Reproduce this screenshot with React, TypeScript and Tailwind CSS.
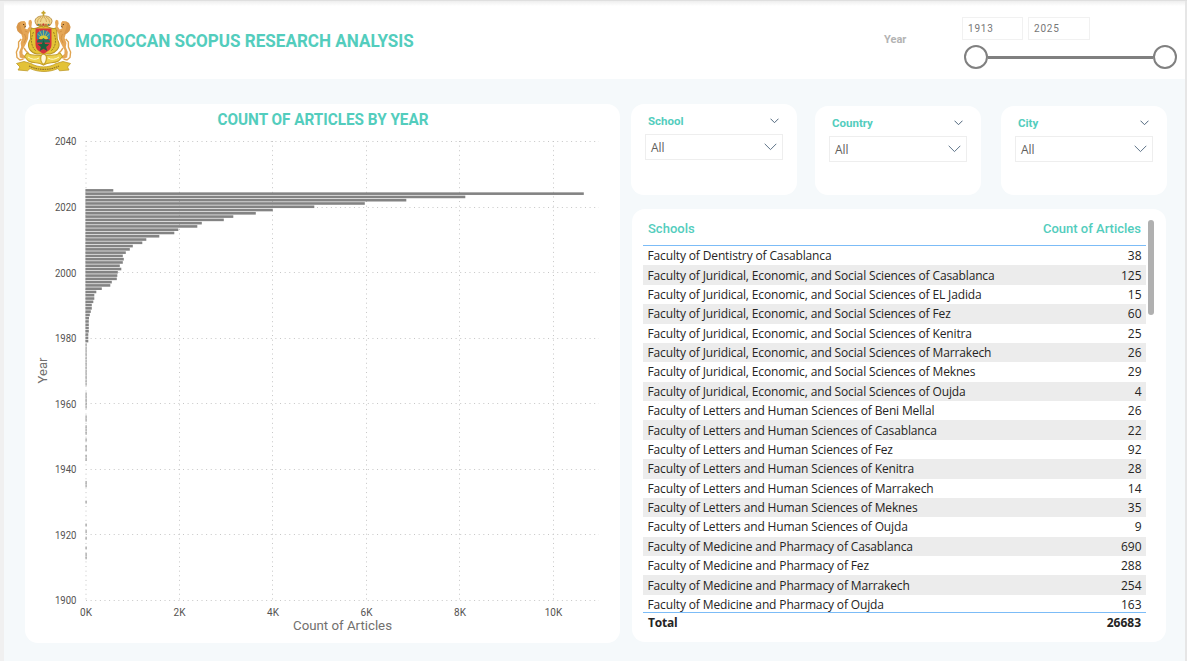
import React from "react";

const DIN = "font-[Roboto,sans-serif]";
const SEGOE = "font-['Open_Sans',sans-serif]";

const schools: [string, number][] = [
  ["Faculty of Dentistry of Casablanca", 38],
  ["Faculty of Juridical, Economic, and Social Sciences of Casablanca", 125],
  ["Faculty of Juridical, Economic, and Social Sciences of EL Jadida", 15],
  ["Faculty of Juridical, Economic, and Social Sciences of Fez", 60],
  ["Faculty of Juridical, Economic, and Social Sciences of Kenitra", 25],
  ["Faculty of Juridical, Economic, and Social Sciences of Marrakech", 26],
  ["Faculty of Juridical, Economic, and Social Sciences of Meknes", 29],
  ["Faculty of Juridical, Economic, and Social Sciences of Oujda", 4],
  ["Faculty of Letters and Human Sciences of Beni Mellal", 26],
  ["Faculty of Letters and Human Sciences of Casablanca", 22],
  ["Faculty of Letters and Human Sciences of Fez", 92],
  ["Faculty of Letters and Human Sciences of Kenitra", 28],
  ["Faculty of Letters and Human Sciences of Marrakech", 14],
  ["Faculty of Letters and Human Sciences of Meknes", 35],
  ["Faculty of Letters and Human Sciences of Oujda", 9],
  ["Faculty of Medicine and Pharmacy of Casablanca", 690],
  ["Faculty of Medicine and Pharmacy of Fez", 288],
  ["Faculty of Medicine and Pharmacy of Marrakech", 254],
  ["Faculty of Medicine and Pharmacy of Oujda", 163],
];

// Bar lengths in pixels, from 2025 going back one year at a time.
const lengths = [
  27.5, 498, 379.5, 320.5, 279, 228.5, 187, 170, 147.5, 138, 116, 111.5, 92.5, 88.5, 73.5, 60.5,
  56.5, 47, 44, 40, 37, 38, 37, 34, 35.5, 32, 31.5, 31, 26, 24.5, 16, 10.5, 8.5, 8.5, 7.5, 6, 6,
  5, 4, 3.2, 3, 3, 3, 3, 2.5, 2.5, 2.5,
];
const sparseYears = [
  1978, 1977, 1976, 1975, 1974, 1973, 1972, 1971, 1970, 1969, 1968, 1967, 1966, 1963, 1962, 1961,
  1960, 1959, 1956, 1955, 1953, 1952, 1951, 1949, 1947, 1946, 1944, 1943, 1936, 1935, 1930, 1923,
  1921, 1919, 1916, 1914, 1913,
];

const yOf = (year: number) => 496.5 - (year - 1900) * 3.277;
const X0 = 61;

function Chart() {
  return (
    <svg width="594" height="539" className={`block ${DIN}`}>
      <g stroke="#c6c6c6" strokeWidth="1" strokeDasharray="1 3.62">
        {[1900, 1920, 1940, 1960, 1980, 2000, 2020, 2040].map((y) => (
          <line key={y} x1={X0} x2={574} y1={Math.floor(yOf(y)) + 0.5} y2={Math.floor(yOf(y)) + 0.5} />
        ))}
        {[0, 1, 2, 3, 4, 5].map((k) => {
          const x = Math.round(X0 + k * 93.5) - (k ? 0.5 : 0);
          return <line key={k} x1={x} x2={x} y1={37} y2={497} />;
        })}
      </g>
      <g fill="#838383">
        {lengths.map((w, i) => (
          <rect key={i} x={60.4} y={yOf(2025 - i) - 1.8} width={w + 0.4} height={2.6} />
        ))}
      </g>
      <g fill="#a0a0a0">
        {sparseYears.map((y) => (
          <rect key={y} x={60.5} y={yOf(y) - 1.6} width={1.2} height={3} />
        ))}
      </g>
      <g fill="#555351" fontSize="10" textAnchor="end">
        {[1900, 1920, 1940, 1960, 1980, 2000, 2020, 2040].map((y) => (
          <text key={y} x="51.5" y={yOf(y) + 3.7} textLength="21.5" lengthAdjust="spacingAndGlyphs">{y}</text>
        ))}
      </g>
      <g fill="#555351" fontSize="10" textAnchor="middle">
        {["0K", "2K", "4K", "6K", "8K", "10K"].map((t, i) => (
          <text key={t} x={X0 + i * 93.5} y="512">{t}</text>
        ))}
      </g>
      <text x="317.5" y="526" fill="#72706e" fontSize="13" textAnchor="middle" textLength="99" lengthAdjust="spacingAndGlyphs">Count of Articles</text>
      <text transform="translate(22 266.5) rotate(-90)" fill="#72706e" fontSize="13" textAnchor="middle">Year</text>
      <text x="298" y="21" fill="#53cdbd" fontSize="16" fontWeight="700" textAnchor="middle" textLength="211" lengthAdjust="spacingAndGlyphs">
        COUNT OF ARTICLES BY YEAR
      </text>
    </svg>
  );
}

function Lion() {
  return (
    <g>
      <path d="M4.2 12.5 L6.5 10.2 L9.5 10 L11 12 L11.2 15 L9.8 17.2 L12.2 18.4 L14.4 15.5 L13.4 12.5 L13.8 9.5 L16 8.8 L17 11 L16.4 16 L15 20 L13.5 23 L13 28 L11 32.5 L9.2 36 L7.5 39 L7.6 43 L10.5 45.6 L9.5 47.8 L4.8 46.6 L4.2 41 L6.2 36 L5.6 32 L7.4 27 L6 22 L4 17.5 Z" fill="#e5a656" />
      <path d="M6.3 28 L3.6 31 L3.6 36 L1.4 41 L2 46.5 L5 49 L8.5 48 M9 37 L11 40 L13.5 42" fill="none" stroke="#e0a450" strokeWidth="1.4" />
      <path d="M1.4 16 L3 12 L6.5 10 L5 13.5 L6.2 18 L8.4 24 L5 22.5 L2.4 20 Z" fill="#d9974a" />
      <path d="M8 13.4 l1.4 .5 M9.4 16 l1.4 -.3" stroke="#593717" strokeWidth="1" />
      <path d="M9.5 23 L11 27 L9 32 M12.5 21 L10 20" fill="none" stroke="#c98538" strokeWidth=".6" />
    </g>
  );
}

function Emblem() {
  return (
    <svg width="57" height="62" viewBox="0 0 57 62" className="block shrink-0">
      <g transform="translate(0 1)">
        <Lion />
        <g transform="translate(57 0) scale(-1 1)"><Lion /></g>
      </g>
      <path d="M16.5 18 C22 21 24 14 28.5 17 C33 14 36 21 40.5 18 C44 23 40 27 43.5 32 C46 38 40 43 35 44 L22 44 C16 43 12 38 14 32 C18 27 13.5 23 16.5 18Z" fill="#e3c335" stroke="#bb9727" strokeWidth="1.1" />
      <path d="M18.5 22 C15.5 29 15.5 36 21 41 M38.5 22 C41.5 29 41.5 36 36 41" fill="none" stroke="#9a7c25" strokeWidth="1" strokeDasharray="2 1" />
      <path d="M20.5 18.5 H36.5 V34 C36.5 40 33 41 28.5 44 C24 41 20.5 40 20.5 34Z" fill="#d5363c" />
      <path d="M22 29 V24 C23.5 19 33.5 19 35 24 V29Z" fill="#3388a5" />
      <path d="M28.5 29 V20 M28.5 29 L24.5 20.5 M28.5 29 L32.5 20.5 M28.5 29 L22.5 24 M28.5 29 L34.5 24" stroke="#c3c55a" strokeWidth=".7" />
      <path d="M24 29 A4.5 3.5 0 0 1 33 29Z" fill="#d9cc37" />
      <path d="M22 31 L24 28.8 L26 30 L28.5 28 L31 30 L33 28.8 L35 31 V32.5 H22Z" fill="#226f5d" />
      <path d="M28.5 30 L30.1 34 L34.4 34.2 L31.1 37 L32.3 41 L28.5 38.7 L24.7 41 L25.9 37 L22.6 34.2 L26.9 34Z" fill="#176340" />
      <path d="M20.5 13 C18.5 9 23 5.5 28.5 6 C34 5.5 38.5 9 36.5 13 L35 15.5 H22Z" fill="#efd78e" stroke="#b88a3d" strokeWidth=".9" />
      <path d="M22.4 12.5 Q22 9 26 7 M25.5 12 Q25.5 9 28 7 M31.5 12 Q31.5 9 29 7 M34.6 12.5 Q35 9 31 7" fill="none" stroke="#c79542" strokeWidth=".7" />
      <path d="M21.8 14.8 H35.2" stroke="#bf7a3c" strokeWidth="2" strokeDasharray="2 .7" />
      <path d="M28.5 .7 V6 M26.5 2.9 H30.5" stroke="#c7a52e" strokeWidth="1.6" />
      <path d="M23 14.6 h1.5 M32.8 14.6 h1.5" stroke="#2f9a72" strokeWidth="1.4" />
      <circle cx="28.5" cy="14.5" r="1" fill="#cc3632" />
      <path d="M12 43 C18 47.5 23 43.5 28.5 46.5 C34 43.5 39 47.5 45 43 L47.5 46.5 L43.5 51 C38 54 34 51.5 28.5 55 C23 51.5 19 54 13.5 51 L9.5 46.5Z" fill="#ecd04b" stroke="#c49e26" strokeWidth="1.1" />
      <path d="M26 46 C27 43.5 31 43.5 31.5 47 C31.5 50 30.5 53 28.8 54.5 C26 53 25 49 26 46" fill="#fff8dc" stroke="#c9a228" strokeWidth="1.2" />
      <path d="M13 47 Q19 51 24 48 M33 48 Q38 51 44 47" fill="none" stroke="#fff8cc" strokeWidth="1" />
      <path d="M1.5 53.5 L9 51.5 L16 53.5 C23 58 34 58 41 53.5 L48 51.5 L55.5 53.5 L52.5 57 L54 60 L44.5 60.8 L43 58.5 C34 62.5 24 62.5 15 58.5 L12.5 60.8 L3 60 L5 57Z" fill="#e3c237" stroke="#bf9b28" strokeWidth=".8" />
      <path d="M14 56 C23 60.5 35 60.5 44 56" fill="none" stroke="#8d6e28" strokeWidth="1.1" strokeDasharray="1.6 .7" />
    </svg>
  );
}

function Chevron({ big }: { big?: boolean }) {
  return big ? (
    <svg width="13" height="8" viewBox="0 0 13 8" className="block"><path d="M.7 .8 L6.5 6.6 L12.3 .8" fill="none" stroke="#5d7388" strokeWidth="1" /></svg>
  ) : (
    <svg width="9" height="6" viewBox="0 0 9 6" className="block"><path d="M.5 .7 L4.5 4.7 L8.5 .7" fill="none" stroke="#4f667c" strokeWidth="1" /></svg>
  );
}

function Slicer({ label, className }: { label: string; className: string }) {
  return (
    <section className={`rounded-[13px] bg-white px-[14px] ${className}`}>
      <div className="flex h-[15px] items-center justify-between pr-[4px] pl-[3px]">
        <span className={`${DIN} pt-px text-[11.5px] leading-[15px] font-bold text-[#53cdbd]`}>{label}</span>
        <Chevron />
      </div>
      <div className={`mt-[6px] flex h-[26px] items-center justify-between border border-[#eeeeee] pr-[5px] pl-[5px] text-[12px] text-[#605e5c] ${SEGOE}`}>
        <span className="pt-[1px]">All</span>
        <Chevron big />
      </div>
    </section>
  );
}

function SchoolsTable() {
  return (
    <section className="ml-[1px] flex h-[433px] w-[534px] rounded-[13px] bg-white pt-[10px] pl-[11px]">
      <div className="w-[503px]">
        <div className={`flex h-[27px] items-start justify-between border-b border-[#7cbcf7] pr-[5px] pl-[5px] text-[13px] leading-[19px] font-medium text-[#53cdbd] ${DIN}`}>
          <span>Schools</span>
          <span>Count of Articles</span>
        </div>
        <div className={`h-[366px] overflow-hidden text-[12px] text-[#252423] ${SEGOE}`}>
          {schools.map(([name, count], i) => (
            <div key={name} className={`flex h-[19.39px] items-center pt-[1px] leading-[18px] ${i % 2 ? "bg-[#ececec]" : "bg-white"}`}>
              <span className="w-[395px] pl-[4.5px] tracking-[-0.14px] whitespace-nowrap">{name}</span>
              <span className="flex-1 pr-[4.5px] text-right">{count}</span>
            </div>
          ))}
        </div>
        <div className={`flex h-[20px] items-center justify-between border-t border-[#7cbcf7] pr-[5px] pl-[5px] text-[12px] font-bold text-[#252423] ${SEGOE}`}>
          <span className="tracking-[-0.2px]">Total</span>
          <span>26683</span>
        </div>
      </div>
      <div className="mt-[1px] ml-[2px] h-[95px] w-[6px] rounded-full bg-[#b0b0b0]" />
    </section>
  );
}

export default function App() {
  return (
    <div className="flex h-[661px] w-[1187px] overflow-hidden border-t border-[#dfdfdf] bg-[#f5f9fb]">
      <div className="w-[4px] bg-[#f0f0f0]" />
      <div className="w-[1181px]">
        <header className="flex h-[78px] bg-white bg-linear-to-b from-[#eeeeee] to-[#ffffff] to-[5px] pl-[10.5px]">
          <div className="pt-[9px]"><Emblem /></div>
          <h1 className={`w-[812.5px] pt-[27px] pl-[3.5px] text-[18.5px] leading-[26px] font-bold whitespace-nowrap text-[#53cdbd] ${DIN}`}>
            <span className="inline-block origin-left scale-x-[0.922]">MOROCCAN SCOPUS RESEARCH ANALYSIS</span>
          </h1>
          <div className={`w-[78px] pt-[31px] text-[11px] leading-[15px] font-bold text-[#b3b3b3] ${DIN}`}>
            <span>Year</span>
          </div>
          <div className={`pt-[16px] ${DIN}`}>
            <div className="flex gap-[5px] text-[10px] tracking-[0.8px] text-[#777777]">
              <span className="flex h-[23px] w-[61px] items-center border border-[#f1f1f1] pl-[5px]">1913</span>
              <span className="flex h-[23px] w-[62px] items-center border border-[#f1f1f1] pl-[5px]">2025</span>
            </div>
            <div className="mt-[5px] ml-[2px] flex items-center">
              <span className="h-[24px] w-[24px] rounded-full border-2 border-[#808080] bg-white" />
              <span className="h-[3px] w-[165px] bg-[#808080]" />
              <span className="h-[24px] w-[24px] rounded-full border-2 border-[#808080] bg-white" />
            </div>
          </div>
        </header>
        <main className="flex pt-[25px] pl-[21px]">
          <section className="h-[539px] w-[595px] rounded-[13px] bg-white"><Chart /></section>
          <div className="ml-[11px]">
            <div className="flex h-[105px] items-start">
              <Slicer label="School" className="h-[91px] w-[166px] pt-[9px]" />
              <Slicer label="Country" className="mt-[2px] ml-[18px] h-[89px] w-[166px] pt-[9px]" />
              <Slicer label="City" className="mt-[2px] ml-[20px] h-[89px] w-[166px] pt-[9px]" />
            </div>
            <SchoolsTable />
          </div>
        </main>
      </div>
      <div className="w-[2px] bg-[#e6e6e6]" />
    </div>
  );
}
